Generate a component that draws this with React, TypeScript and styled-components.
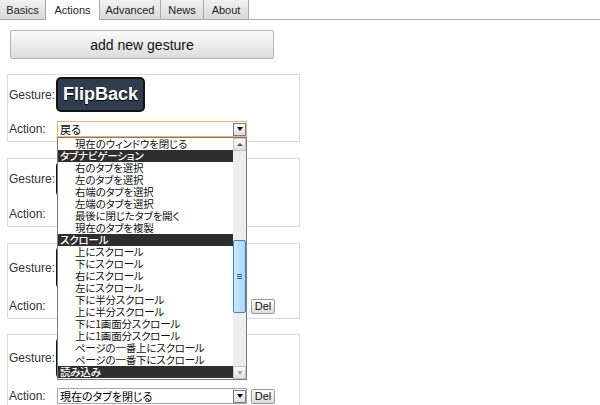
import React from "react";
import styled, { createGlobalStyle } from "styled-components";

const GlobalStyle = createGlobalStyle`
  html, body {
    margin: 0;
    padding: 0;
    background: #ffffff;
  }
  body {
    font-family: "Liberation Sans", Arial, "Noto Sans CJK JP", sans-serif;
    color: #222;
  }
`;

const JP = `"Noto Sans CJK JP", "Liberation Sans", sans-serif`;

const Page = styled.div`
  width: 600px;
  height: 405px;
  overflow: hidden;
`;

const TabBar = styled.div`
  display: flex;
  height: 20px;
  box-sizing: border-box;
  border-bottom: 1px solid #a9a9a9;
`;

const Tab = styled.div<{ $active?: boolean; $w: number }>`
  width: ${(p) => p.$w}px;
  height: ${(p) => (p.$active ? 20 : 19)}px;
  box-sizing: border-box;
  display: flex;
  align-items: center;
  justify-content: center;
  font-size: 11px;
  color: #222;
  border-right: 1px solid #a9a9a9;
  background: ${(p) =>
    p.$active ? "#ffffff" : "linear-gradient(#f1f1f1, #d9d9d9)"};
`;

const AddButton = styled.button`
  display: block;
  margin: 10px 0 0 10px;
  width: 264px;
  height: 29px;
  border: 1px solid #b3b3b3;
  border-radius: 2px;
  background: linear-gradient(#fbfbfb, #dcdcdc);
  font-family: "Liberation Sans", Arial, sans-serif;
  font-size: 14px;
  color: #111;
  padding: 0;
`;

const CardList = styled.div`
  display: flex;
  flex-direction: column;
  padding-left: 7px;
  margin-top: 15px;
`;

const Card = styled.div<{ $gap: number }>`
  width: 293px;
  box-sizing: border-box;
  border: 1px solid #dcdcdc;
  padding: 2px 0 4px 1px;
  margin-bottom: ${(p) => p.$gap}px;
`;

const GestureRow = styled.div<{ $h: number }>`
  display: flex;
  align-items: center;
  height: ${(p) => p.$h}px;
`;

const Label = styled.span<{ $w?: number }>`
  font-size: 12px;
  color: #333;
  width: ${(p) => (p.$w ? `${p.$w}px` : "auto")};
  flex: none;
`;

const Badge = styled.div`
  margin-left: 1px;
  height: 100%;
  box-sizing: border-box;
  padding: 0 5px;
  display: flex;
  align-items: center;
  background: #2f3d4c;
  border: 2px solid #141414;
  border-radius: 5px;
  color: #ffffff;
  font-weight: bold;
  font-size: 18px;
  text-shadow: 0 1px 1px #000;
`;

const ActionRow = styled.div`
  display: flex;
  align-items: center;
  margin-top: 9px;
  height: 16px;
`;

const SelectWrap = styled.div`
  position: relative;
  width: 190px;
  height: 16px;
`;

const SelectBox = styled.div<{ $focus?: boolean }>`
  width: 100%;
  height: 100%;
  box-sizing: border-box;
  border: 1px solid ${(p) => (p.$focus ? "#e2bb62" : "#a6a6a6")};
  display: flex;
  align-items: center;
  background: #fff;
`;

const SelectText = styled.span`
  flex: 1;
  padding-left: 2px;
  font-family: ${JP};
  font-feature-settings: "palt";
  font-size: 11px;
  line-height: 14px;
  color: #000;
  white-space: nowrap;
  overflow: hidden;
`;

const ArrowBox = styled.div<{ $light?: boolean }>`
  width: 13px;
  height: 13px;
  box-sizing: border-box;
  border: 1px solid ${(p) => (p.$light ? "#c4c4c4" : "#7d7d7d")};
  background: linear-gradient(#ffffff, #dedede);
  display: flex;
  align-items: center;
  justify-content: center;
  flex: none;
`;

const Triangle = styled.div<{ $up?: boolean; $color: string }>`
  width: 0;
  height: 0;
  border-left: 3px solid transparent;
  border-right: 3px solid transparent;
  ${(p) =>
    p.$up
      ? `border-bottom: 3px solid ${p.$color};`
      : `border-top: 4px solid ${p.$color};`}
`;

const DelButton = styled.button`
  margin-left: 4px;
  width: 24px;
  height: 15px;
  padding: 0;
  border: 1px solid #9a9a9a;
  border-radius: 2px;
  background: linear-gradient(#fcfcfc, #dcdcdc);
  font-family: "Liberation Sans", Arial, sans-serif;
  font-size: 11px;
  color: #111;
`;

const DropList = styled.div`
  position: absolute;
  top: 16px;
  left: 0;
  width: 190px;
  height: 243px;
  box-sizing: border-box;
  border: 1px solid #7c7c7c;
  background: #fff;
  display: flex;
  z-index: 10;
`;

const Rows = styled.div`
  flex: 1;
  display: flex;
  flex-direction: column;
  overflow: hidden;
`;

const Row = styled.div<{ $header?: boolean }>`
  height: 12px;
  flex: none;
  font-family: ${JP};
  font-feature-settings: "palt";
  font-size: 10.5px;
  letter-spacing: -0.2px;
  line-height: 12px;
  white-space: nowrap;
  padding-left: ${(p) => (p.$header ? 2 : 17)}px;
  background: ${(p) => (p.$header ? "#2e2e2e" : "transparent")};
  color: ${(p) => (p.$header ? "#ffffff" : "#111")};
  font-weight: ${(p) => (p.$header ? 500 : 400)};
`;

const ScrollBar = styled.div`
  width: 13px;
  flex: none;
  background: #ededed;
  display: flex;
  flex-direction: column;
`;

const TrackGap = styled.div<{ $h?: number }>`
  ${(p) => (p.$h ? `height: ${p.$h}px; flex: none;` : "flex: 1;")}
`;

const Thumb = styled.div`
  height: 73px;
  box-sizing: border-box;
  border: 1px solid #3f84bd;
  border-radius: 2px;
  background: linear-gradient(90deg, #cbe8fb, #a9d6f5);
  display: flex;
  flex-direction: column;
  align-items: center;
  justify-content: center;
  gap: 1px;
`;

const Grip = styled.div`
  width: 5px;
  height: 1px;
  background: #2f5f86;
`;

type Item = { text: string; header?: boolean };

const items: Item[] = [
  { text: "現在のウィンドウを閉じる" },
  { text: "タブナビゲーション", header: true },
  { text: "右のタブを選択" },
  { text: "左のタブを選択" },
  { text: "右端のタブを選択" },
  { text: "左端のタブを選択" },
  { text: "最後に閉じたタブを開く" },
  { text: "現在のタブを複製" },
  { text: "スクロール", header: true },
  { text: "上にスクロール" },
  { text: "下にスクロール" },
  { text: "右にスクロール" },
  { text: "左にスクロール" },
  { text: "下に半分スクロール" },
  { text: "上に半分スクロール" },
  { text: "下に1画面分スクロール" },
  { text: "上に1画面分スクロール" },
  { text: "ページの一番上にスクロール" },
  { text: "ページの一番下にスクロール" },
  { text: "読み込み", header: true },
];

type Gesture = {
  name: string;
  badge: number;
  gap: number;
  action: string;
  del: boolean;
  open?: boolean;
};

const gestures: Gesture[] = [
  { name: "FlipBack", badge: 35, gap: 16, action: "戻る", del: false, open: true },
  { name: "FlipForward", badge: 36, gap: 16, action: "進む", del: false },
  { name: "CloseTab", badge: 43, gap: 15, action: "再読み込み", del: true },
  { name: "NewTab", badge: 42, gap: 0, action: "現在のタブを閉じる", del: true },
];

const tabs = [
  { label: "Basics", w: 46 },
  { label: "Actions", w: 54, active: true },
  { label: "Advanced", w: 61 },
  { label: "News", w: 43 },
  { label: "About", w: 45 },
];

function Dropdown() {
  return (
    <DropList>
      <Rows>
        {items.map((it, i) => (
          <Row key={i} $header={it.header}>
            {it.text}
          </Row>
        ))}
      </Rows>
      <ScrollBar>
        <ArrowBox $light>
          <Triangle $up $color="#555" />
        </ArrowBox>
        <TrackGap $h={89} />
        <Thumb>
          <Grip />
          <Grip />
          <Grip />
        </Thumb>
        <TrackGap />
        <ArrowBox $light>
          <Triangle $color="#aaa" />
        </ArrowBox>
      </ScrollBar>
    </DropList>
  );
}

function GestureCard({ g }: { g: Gesture }) {
  return (
    <Card $gap={g.gap}>
      <GestureRow $h={g.badge}>
        <Label>Gesture:</Label>
        <Badge>{g.name}</Badge>
      </GestureRow>
      <ActionRow>
        <Label $w={48}>Action:</Label>
        <SelectWrap>
          <SelectBox $focus={g.open}>
            <SelectText>{g.action}</SelectText>
            <ArrowBox>
              <Triangle $color="#000" />
            </ArrowBox>
          </SelectBox>
          {g.open && <Dropdown />}
        </SelectWrap>
        {g.del && <DelButton>Del</DelButton>}
      </ActionRow>
    </Card>
  );
}

export default function App() {
  return (
    <Page>
      <GlobalStyle />
      <TabBar>
        {tabs.map((t) => (
          <Tab key={t.label} $w={t.w} $active={t.active}>
            {t.label}
          </Tab>
        ))}
      </TabBar>
      <AddButton>add new gesture</AddButton>
      <CardList>
        {gestures.map((g, i) => (
          <GestureCard key={i} g={g} />
        ))}
      </CardList>
    </Page>
  );
}
